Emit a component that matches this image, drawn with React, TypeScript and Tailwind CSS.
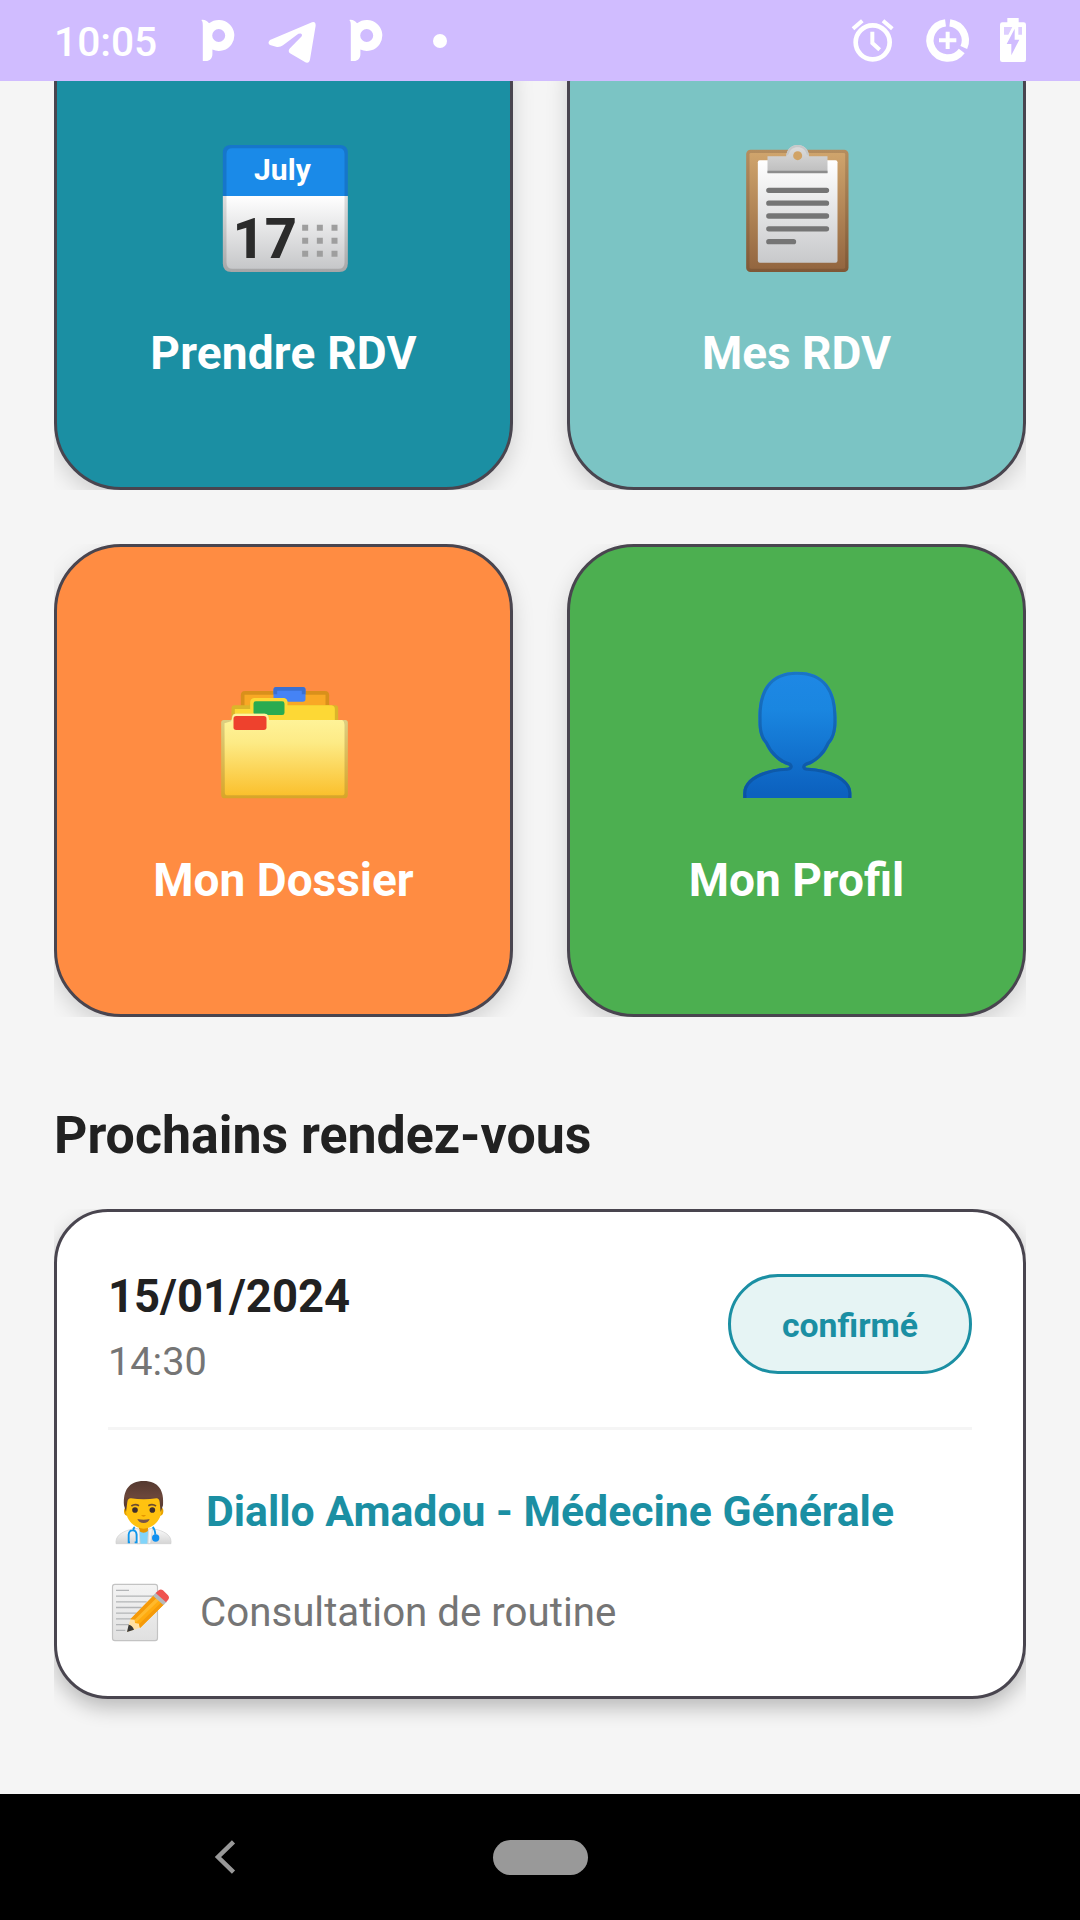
import type { ReactNode } from "react";

function PLogo() {
  return (
    <svg className="h-[45px] w-9" viewBox="0 0 36 45" fill="white" fillRule="evenodd">
      <path d="M1.3 2C4.2 1.4 7 2.6 9 5.3A15.6 15.5 0 1 1 12.4 31.6V36C12.4 40.8 9.6 43 6 43H2.8V8C2.8 5 2.6 3.2 1.3 2ZM18.7 11a6.5 6.5 0 1 0 0 13a6.5 6.5 0 1 0 0-13Z" />
    </svg>
  );
}

function StatusBar() {
  return (
    <header className="relative z-10 flex h-[81px] w-full items-center bg-[#d0bcff] text-white">
      <span className="ml-[54px] w-[146px] pt-[2px] text-[40.7px] leading-[48px] font-medium">10:05</span>
      <PLogo />
      <svg className="ml-[30px] h-[45px] w-[52px]" viewBox="266 18 52 45" fill="white">
        <path d="M312 22.3Q316 21.3 315.6 26L310 59.5Q308.8 64.5 304.5 61.8L290 53.2Q287.4 51 290 48.3L301.5 36.4Q302.8 34 300.5 33.6Q298.5 33.5 297 34.8L283 45.2Q280 47.6 276 46.8L270 45Q267 43 270 40Z" />
      </svg>
      <div className="ml-[30px]">
        <PLogo />
      </div>
      <span className="ml-[49px] size-[14px] rounded-full bg-white" />
      <svg className="ml-auto h-[81px] w-[280px]" viewBox="0 0 840 243" fill="none" stroke="white">
        <circle cx="218" cy="127" r="51" strokeWidth="14" />
        <path d="M217 95V129L239 149" strokeWidth="12" />
        <path d="M159 86L187 62M249 62L277 86" strokeWidth="12" />
        <path d="M449.5 68.4A53 53 0 0 1 491.4 142.6M485.3 152.9A53 53 0 1 1 436.5 68.4" strokeWidth="22" />
        <path d="M443 95V147M417 121H469" strokeWidth="12" />
        <path d="M622 54H656V67H671Q678 67 678 74V179Q678 186 671 186H607Q600 186 600 179V74Q600 67 607 67H622Z" fill="white" stroke="none" />
        <path d="M612 81H637L625 104H612ZM655 81H666V104H655Z" fill="#ddceff" stroke="none" />
        <path d="M644 86V119H658L634 166V132H620Z" fill="#d0bcff" stroke="none" />
      </svg>
    </header>
  );
}

function CalendarIcon() {
  return (
    <svg className="size-[136px]" viewBox="46.5 33 408 408">
      <defs>
        <linearGradient id="calPage" x1="0" y1="0" x2="0" y2="1">
          <stop offset="0" stopColor="#fff" />
          <stop offset="1" stopColor="#c6c7c9" />
        </linearGradient>
        <linearGradient id="calEdge" x1="0" y1="0" x2="0" y2="1">
          <stop offset="0" stopColor="#dedede" />
          <stop offset="1" stopColor="#a6a6a7" />
        </linearGradient>
      </defs>
      <path d="M67 198H442V400Q442 426 416 426H93Q67 426 67 400Z" fill="url(#calEdge)" />
      <path d="M78 198H432V398Q432 416 414 416H96Q78 416 78 398Z" fill="url(#calPage)" />
      <path d="M67 198V69Q67 45 91 45H418Q442 45 442 69V198Z" fill="#1676cb" />
      <path d="M78 198V72Q78 55 95 55H415Q432 55 432 72V198Z" fill="#1a8ae8" />
      <text x="246" y="151" textAnchor="middle" textLength="171" lengthAdjust="spacingAndGlyphs" fontSize="88" fontWeight="700" fill="white">July</text>
      <text x="96" y="384" textLength="194" lengthAdjust="spacingAndGlyphs" fontSize="169" fontWeight="800" fill="#2b2b2b">17</text>
      <path d="M305 293.500H411M305 332.500H411M305 371.500H411" stroke="#9e9e9e" strokeWidth="18" strokeDasharray="18 26" />
    </svg>
  );
}

function ClipboardIcon() {
  return (
    <svg className="size-[136px]" viewBox="25.5 33 408 408">
      <defs>
        <linearGradient id="board" x1="0" y1="0" x2="0" y2="1">
          <stop offset="0" stopColor="#cfa46c" />
          <stop offset="1" stopColor="#936640" />
        </linearGradient>
        <linearGradient id="boardEdge" x1="0" y1="0" x2="0" y2="1">
          <stop offset="0" stopColor="#b58e5f" />
          <stop offset="1" stopColor="#7f5836" />
        </linearGradient>
        <linearGradient id="paper" x1="0" y1="0" x2="0" y2="1">
          <stop offset="0" stopColor="#fff" />
          <stop offset="1" stopColor="#c8c9cb" />
        </linearGradient>
        <linearGradient id="clip" x1="0" y1="0" x2="0" y2="1">
          <stop offset="0" stopColor="#dedede" />
          <stop offset="1" stopColor="#bdbdbd" />
        </linearGradient>
      </defs>
      <rect x="77" y="59" width="307" height="367" rx="13" fill="url(#boardEdge)" />
      <rect x="87" y="69" width="287" height="347" rx="4" fill="url(#board)" />
      <rect x="112" y="91" width="239" height="307" rx="6" fill="url(#paper)" />
      <path d="M141 79H197C199 57 213 45 231.500 45S264 57 266 79H321V129H141Z" fill="url(#clip)" />
      <path d="M197 79C199 57 213 45 231.500 45S264 57 266 79L258 72C254 58 245 52 231.500 52S209 58 205 72Z" fill="#c6c8c9" />
      <circle cx="231.500" cy="77" r="13.500" fill="#d1a365" />
      <path d="M141 122H321V130H141Z" fill="#8d8d8d" />
      <path d="M145 181H318M145 219.500H318M145 258H318M145 296.500H318M145 335H219" stroke="#757575" strokeWidth="16" strokeLinecap="round" />
    </svg>
  );
}

function FolderIcon() {
  return (
    <svg className="size-[136px]" viewBox="46.5 -6 408 408">
      <defs>
        <linearGradient id="folder" x1="0" y1="0" x2="0" y2="1">
          <stop offset="0" stopColor="#fff59d" />
          <stop offset=".35" stopColor="#fdeb86" />
          <stop offset="1" stopColor="#fbc02d" />
        </linearGradient>
        <linearGradient id="folderEdge" x1="0" y1="0" x2="0" y2="1">
          <stop offset="0" stopColor="#dcd28a" />
          <stop offset="1" stopColor="#d8a528" />
        </linearGradient>
      </defs>
      <path d="M121 160V76Q121 63 134 63H373Q386 63 386 76V160Z" fill="#d9901b" />
      <path d="M132 160V74H375V160Z" fill="#f9a825" />
      <rect x="219" y="51" width="96" height="44" rx="8" fill="#4583f5" />
      <path d="M219 73V59Q219 51 227 51H307Q315 51 315 59V73H304V62H230V73Z" fill="#3b70d0" />
      <path d="M93 170V115Q93 106 102 106H147L149 95Q151 84 162 84H248Q259 84 261 95L263 106H404Q413 106 413 115V170Z" fill="#dbb52a" />
      <path d="M103 170V117H149V95Q151 84 162 84H248Q259 84 261 95V106H393Q403 108 403 117V170Z" fill="#fdd835" />
      <rect x="159" y="94" width="93" height="41" rx="7" fill="#2aab50" />
      <path d="M62 158Q62 150 70 150H94V141Q96 131 106 131H192Q203 132 204 141V150H434Q442 150 442 158V374Q442 385 431 385H73Q62 385 62 374Z" fill="url(#folderEdge)" />
      <path d="M72 160L92 154L96 140Q98 131 106 131H192Q203 132 204 141L206 150H425Q432 154 432 164V368Q432 376 424 376H82Q73 376 73 368Z" fill="url(#folder)" />
      <rect x="99" y="138" width="99" height="42" rx="8" fill="#ee412d" />
    </svg>
  );
}

const BUST =
  "M68 414V400C68 353 132 326 200 323Q210 322 206 317C174 308 146 280 134 251C120 236 113 213 114 180C111 95 143 35 230 35S350 95 348 180C349 213 341 237 327 252C315 281 290 308 258 317Q250 322 260 323C329 326 393 355 393 400V414Z";

function PersonIcon() {
  return (
    <svg className="size-[136px]" viewBox="25.5 24 408 408">
      <defs>
        <linearGradient id="person" x1="0" y1="0" x2="0" y2="1">
          <stop offset="0" stopColor="#1e88e5" />
          <stop offset=".3" stopColor="#1a86e0" />
          <stop offset="1" stopColor="#0b5fbd" />
        </linearGradient>
        <linearGradient id="personEdge" x1="0" y1="0" x2="0" y2="1">
          <stop offset="0" stopColor="#1a75c5" />
          <stop offset="1" stopColor="#0a52a2" />
        </linearGradient>
        <clipPath id="personClip">
          <path d={BUST} />
        </clipPath>
      </defs>
      <path d={BUST} fill="url(#person)" />
      <path d={BUST} fill="none" stroke="url(#personEdge)" strokeWidth="19" clipPath="url(#personClip)" />
      <path d="M78 402H383V414H78Z" fill="#0c61bf" />
    </svg>
  );
}

function DoctorIcon() {
  return (
    <svg className="h-[66px] w-16 shrink-0" viewBox="204 27 192 198">
      <defs>
        <linearGradient id="hair" x1="0" y1="0" x2="0" y2="1">
          <stop offset="0" stopColor="#543930" />
          <stop offset=".5" stopColor="#6b473b" />
          <stop offset="1" stopColor="#4e342e" />
        </linearGradient>
        <linearGradient id="coat" x1="0" y1="0" x2="0" y2="1">
          <stop offset="0" stopColor="#fafafa" />
          <stop offset="1" stopColor="#d5d5d5" />
        </linearGradient>
      </defs>
      <path d="M228 221V214C229 194 253 182 278 177H343C369 182 393 194 393 214V221Z" fill="url(#coat)" stroke="#cfcfcf" strokeWidth="2" />
      <path d="M298 180H325L322 221H301Z" fill="#81d4fa" />
      <path d="M297 168H324V183Q311 193 297 183Z" fill="#e59600" />
      <path d="M284 174L298 178L300 221H291ZM338 174L325 178L324 221H332Z" fill="#f5f5f5" stroke="#c9c9c9" strokeWidth="2" />
      <path d="M259 112Q251 114 252 125Q253 136 263 138ZM363 112Q371 114 370 125Q369 136 359 138Z" fill="#e8a300" />
      <path d="M258 78H364V122C364 151 336 176 311 176S258 151 258 122Z" fill="#ffc210" />
      <path d="M252 106C249 62 266 33 311 33S373 62 369 106L362 126L359 96Q357 84 349 85Q311 91 273 85Q264 84 262 96L258 126Z" fill="url(#hair)" />
      <path d="M274 108Q285 100 297 107M325 107Q337 100 348 108" fill="none" stroke="#6d4c30" strokeWidth="5" />
      <circle cx="285" cy="120" r="8.500" fill="#3f2f2c" />
      <circle cx="337" cy="120" r="8.500" fill="#3f2f2c" />
      <path d="M303 135H318Q311 145 303 135Z" fill="#e59600" />
      <path d="M292 147Q311 152 329 147Q325 159 311 159T292 147Z" fill="#795548" />
      <path d="M284 171Q279 175 280 182M270 217H266V194Q267 181 278 181T290 194V217H284M338 171Q345 178 346 194" fill="none" stroke="#0f97ec" strokeWidth="5.500" />
      <circle cx="347" cy="204" r="11" fill="#1090f0" />
    </svg>
  );
}

function MemoIcon() {
  return (
    <svg className="h-[60px] w-[62px] shrink-0" viewBox="204 336 186 180">
      <defs>
        <linearGradient id="sheet" x1="0" y1="0" x2="0" y2="1">
          <stop offset="0" stopColor="#f4f4f4" />
          <stop offset="1" stopColor="#e0e0e0" />
        </linearGradient>
      </defs>
      <rect x="217.500" y="343" width="135" height="169" rx="7" fill="url(#sheet)" stroke="#c3c3c3" strokeWidth="3.500" />
      <path d="M228 361H267M228 378.500H340M228 395.500H320M228 412.500H305M228 429.500H290M228 446.500H275M228 464H267M228 481H256" stroke="#b3b5b7" strokeWidth="4" />
      <path d="M261 486L271 448L288 441L294 456L302 464L300 473Z" fill="#ffe0a3" />
      <path d="M261 486L266 464Q277 465 282 479Z" fill="#383838" />
      <path d="M271 448L343 374L373 402L300 474L297 461L285 459L284 447Z" fill="#ffab0f" />
      <path d="M271 448L343 374L352 382L284 449ZM297 463L366 395L373 402L300 474Z" fill="#f59a0a" />
      <path d="M284 449L352 382L359 389L287 458Z" fill="#ffb92c" />
      <path d="M339 377L349 367L380 396L370 405Z" fill="#b5b9bc" />
      <path d="M347 369L357 360Q363 356 369 361L384 376Q390 383 384 390L378 397Z" fill="#ef5350" />
    </svg>
  );
}

function Tile({ className, label, children }: { className: string; label: string; children: ReactNode }) {
  return (
    <div className={`flex h-full w-[459px] flex-col items-center rounded-[67px] border-3 border-[#49454f] pt-[121px] shadow-[0_8px_22px_rgba(0,0,0,0.15)] ${className}`}>
      {children}
      <span className="mt-12 text-[46px] leading-[56px] font-bold text-white">{label}</span>
    </div>
  );
}

export default function App() {
  return (
    <div className="flex h-[1920px] w-[1080px] flex-col overflow-hidden bg-[#f5f5f5] font-['Roboto',sans-serif]">
      <StatusBar />
      <main className="min-h-0 flex-1 overflow-hidden">
        <div className="-mt-16 px-[54px]">
          <div className="mb-[54px] flex h-[473px] justify-between overflow-hidden">
            <Tile className="bg-[#1b8fa3] tracking-[0.2px]" label="Prendre RDV"><CalendarIcon /></Tile>
            <Tile className="bg-[#7bc4c4]" label="Mes RDV"><ClipboardIcon /></Tile>
          </div>
          <div className="flex h-[473px] justify-between overflow-hidden">
            <Tile className="bg-[#ff8c42]" label="Mon Dossier"><FolderIcon /></Tile>
            <Tile className="bg-[#4caf50]" label="Mon Profil"><PersonIcon /></Tile>
          </div>
          <h2 className="mt-[87px] mb-[41px] text-[51.85px] leading-[64px] font-bold text-[#212121]">Prochains rendez-vous</h2>
          <div className="h-[540px] overflow-hidden">
            <div className="h-[490px] rounded-[54px] border-3 border-[#49454f] bg-white px-[51px] shadow-[0_9px_20px_rgba(0,0,0,0.24)]">
              <div className="flex h-[218px] items-start justify-between border-b-3 border-[#f5f5f5]">
                <div className="flex flex-col">
                  <span className="mt-[57px] text-[45.4px] leading-[56px] font-bold text-[#212121]">15/01/2024</span>
                  <span className="mt-[9px] text-[39.7px] leading-[56px] text-[#757575]">14:30</span>
                </div>
                <span className="mt-[62px] flex h-[100px] w-[244px] items-center justify-center rounded-full border-3 border-[#1b8fa3] bg-[#e6f4f4] pt-[4px] text-[33.8px] font-bold text-[#1b8fa3]">confirmé</span>
              </div>
              <div className="mt-[49px] flex h-[66px] items-center">
                <DoctorIcon />
                <span className="ml-[34px] pb-[2px] text-[42.75px] leading-[56px] font-bold text-[#1b8fa3]">Diallo Amadou - Médecine Générale</span>
              </div>
              <div className="mt-[37px] flex h-[60px] items-center">
                <MemoIcon />
                <span className="ml-[30px] pt-[2px] text-[40.25px] leading-[56px] text-[#757575]">Consultation de routine</span>
              </div>
            </div>
          </div>
        </div>
      </main>
      <nav className="flex h-[126px] items-center bg-black">
        <svg className="ml-[210px] h-10 w-[30px]" viewBox="210 1837.5 30 40" fill="none" stroke="#999" strokeWidth="4.500">
          <path d="M233.500 1842.300L218 1857.500L233.500 1872.700" />
        </svg>
        <span className="ml-[253px] h-[35px] w-[95px] rounded-full bg-[#999]" />
      </nav>
    </div>
  );
}
